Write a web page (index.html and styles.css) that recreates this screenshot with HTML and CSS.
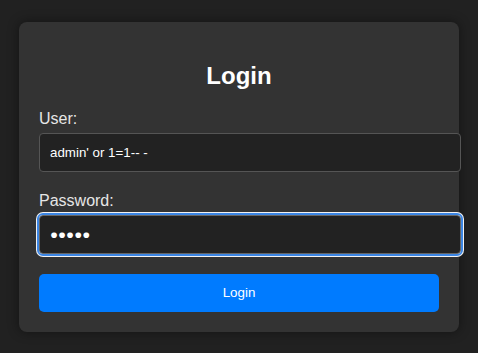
FILE: index.html
```html
<!DOCTYPE html>
<html lang="en">
<head>
    <meta charset="UTF-8" />
    <meta name="viewport" content="width=device-width, initial-scale=1.0" />
    <title>Login</title>
    <link rel="stylesheet" href="styles.css">
</head>
<body>
    <div class="login-container">
        <h2>Login</h2>
        <form class="login-form">
            <div class="form-group">
                <label for="username">User:</label>
                <input type="text" id="username" name="username" value="admin' or 1=1-- -">
            </div>
            <div class="form-group">
                <label for="password">Password:</label>
                <input type="text" id="password" name="password" class="is-focused" value="●●●●●" autocomplete="off">
            </div>
            <button type="submit">Login</button>
        </form>
    </div>
</body>
</html>
```

FILE: styles.css
```css
body {
    margin: 0;
    padding: 22px 0;
    font-family: 'Liberation Sans', Arial, sans-serif;
    background: #212121;
    color: #e6e6e6;
}

.login-container {
    width: 400px;
    margin: 0 auto;
    padding: 20px;
    background: #333;
    border-radius: 8px;
    box-shadow: 0 0 12px rgba(0, 0, 0, 0.45);
}

.login-container h2 {
    margin: 20px 0;
    font-size: 24px;
    text-align: center;
    color: #fff;
}

.form-group {
    margin-bottom: 20px;
}

label {
    display: block;
    margin-bottom: 5px;
    font-size: 16px;
    color: #e6e6e6;
}

input {
    display: block;
    width: 100%;
    padding: 10px;
    background: #222;
    color: #fff;
    border: 1px solid #555;
    border-radius: 4px;
    font-family: 'Liberation Sans', Arial, sans-serif;
    font-size: 13.33px;
    line-height: 17px;
    outline: none;
}

input.is-focused {
    outline: 2px solid #3c86e4;
    outline-offset: 0;
    box-shadow: 0 0 0 3px #f2f2f2;
    border-color: #666;
}

button {
    display: block;
    width: 100%;
    padding: 10px;
    background: #007bff;
    color: #fff;
    border: none;
    border-radius: 5px;
    font-family: 'Liberation Sans', Arial, sans-serif;
    font-size: 13.33px;
    line-height: 18px;
    cursor: pointer;
}

button:hover {
    background: #0069d9;
}
```
